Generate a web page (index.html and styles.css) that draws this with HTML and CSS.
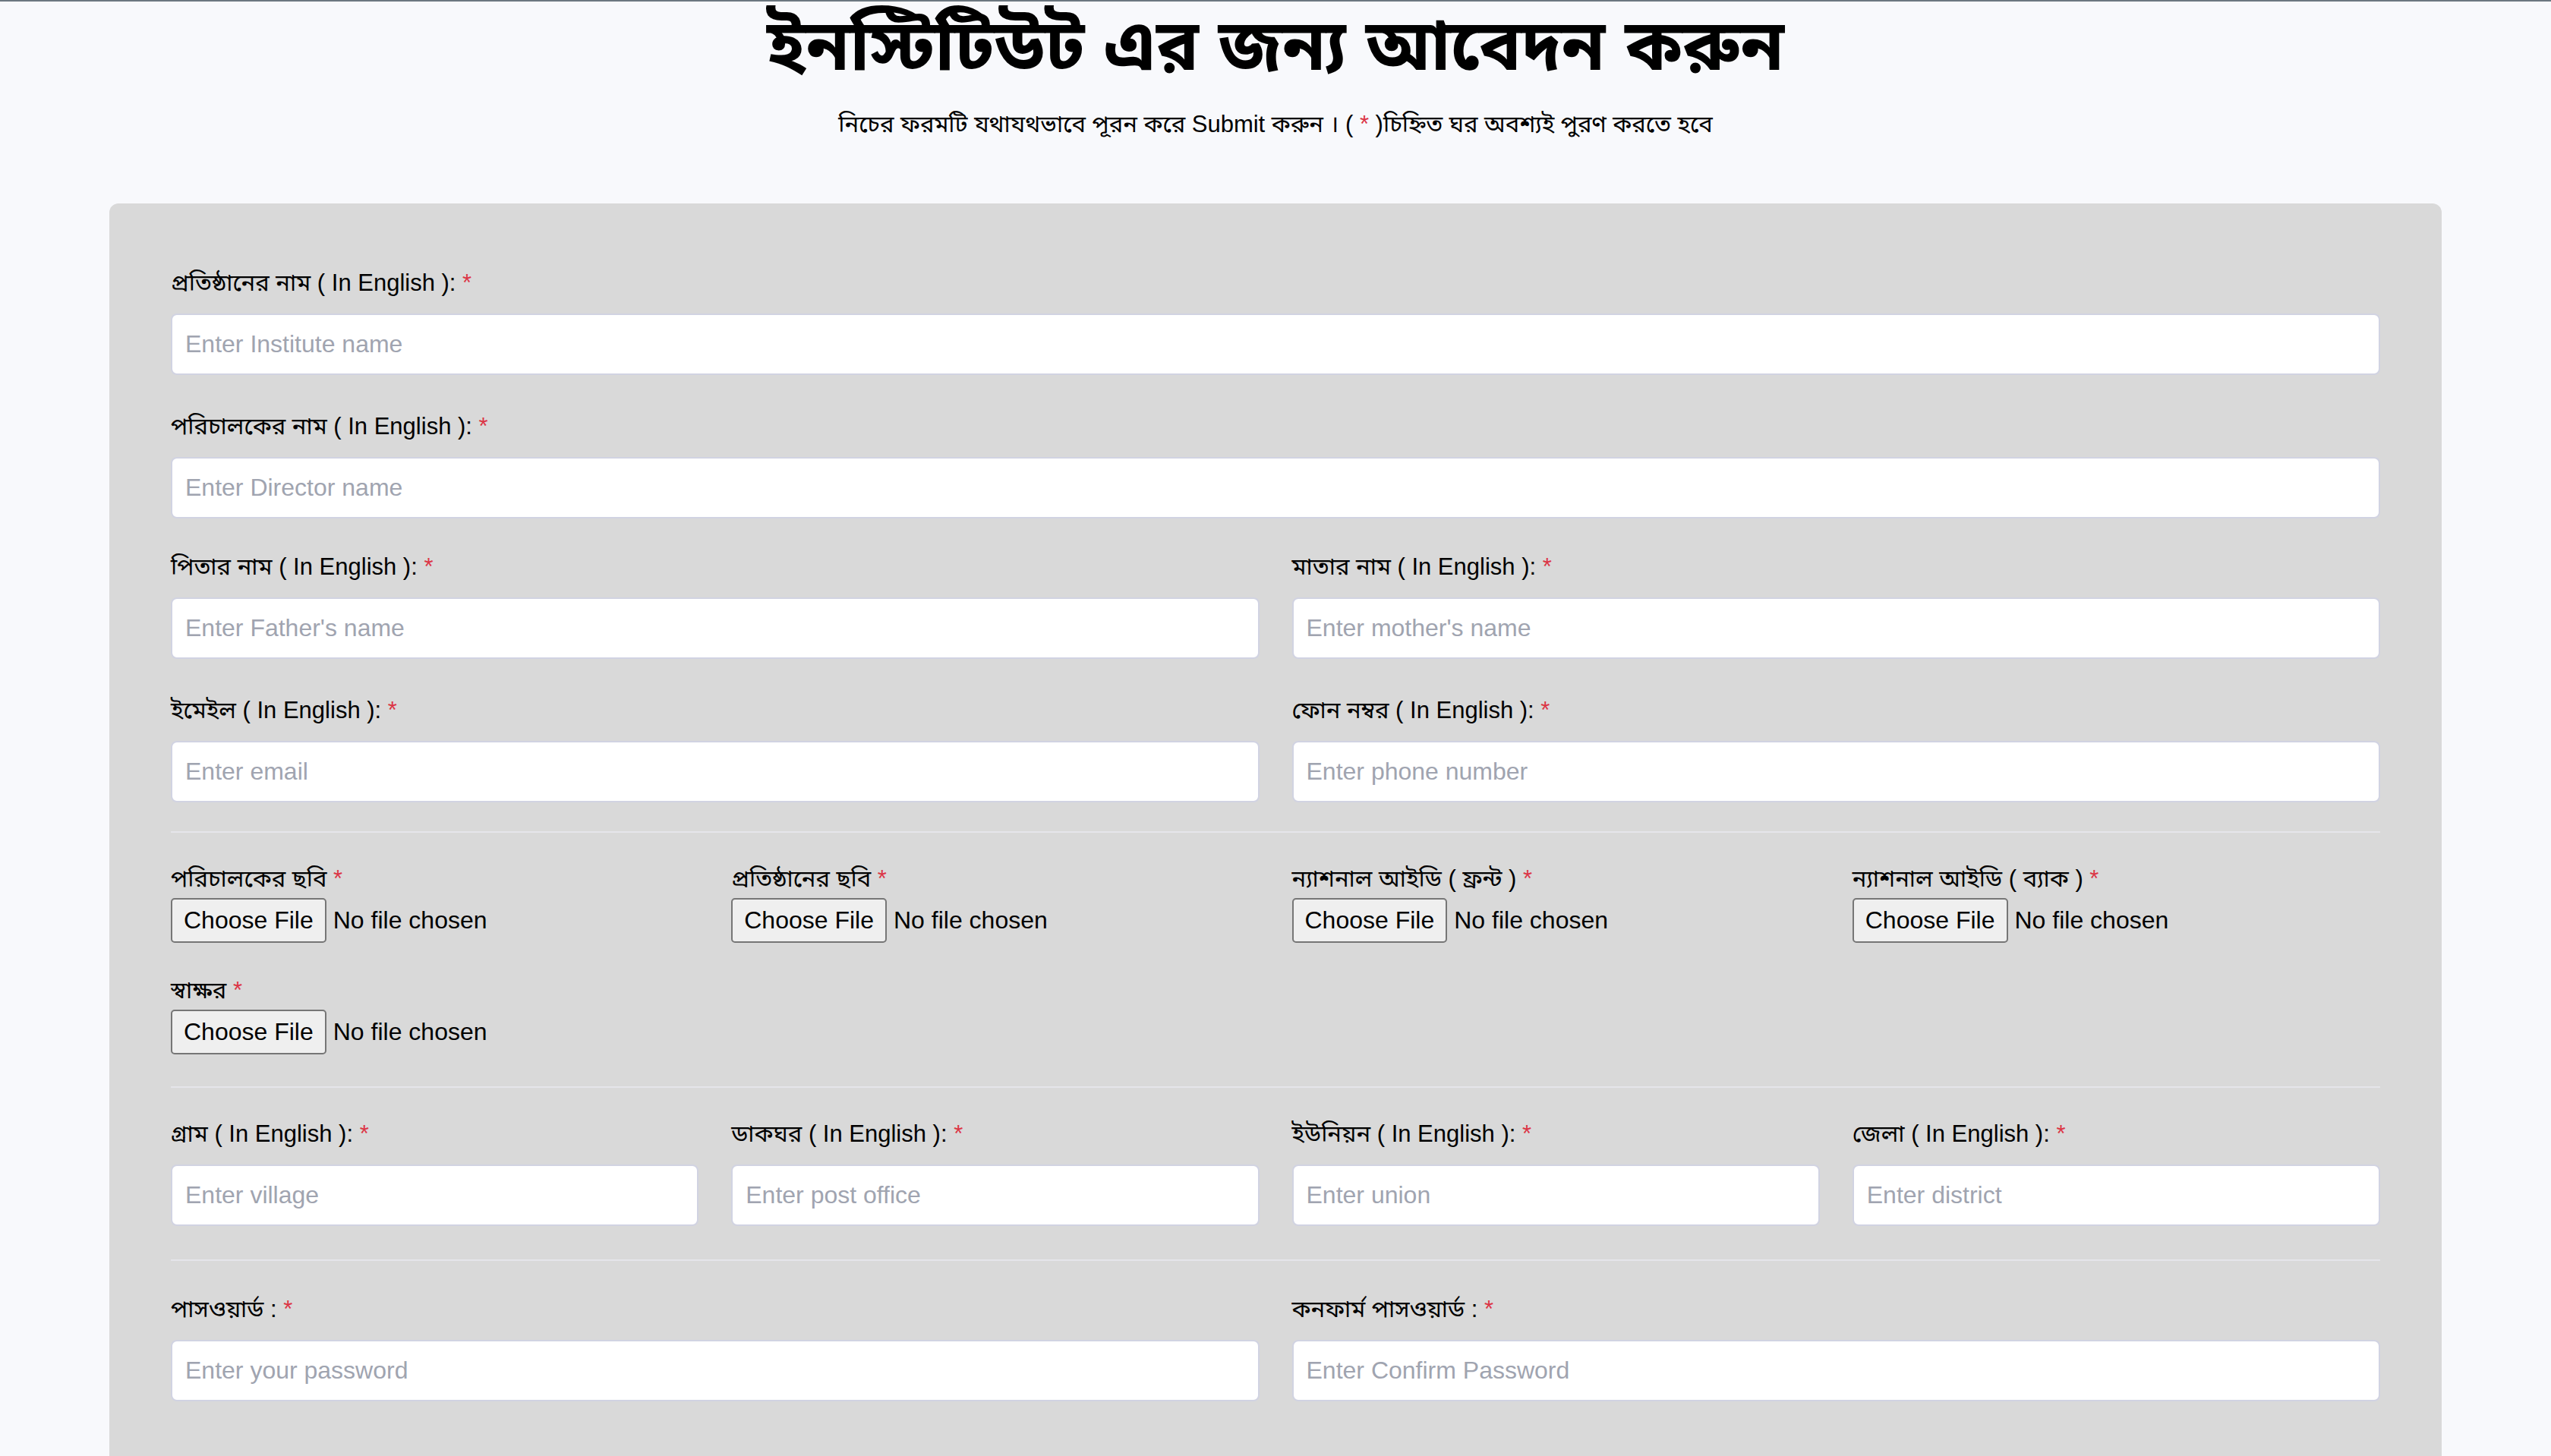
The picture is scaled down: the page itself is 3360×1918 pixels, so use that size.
FILE: index.html
```html
<!DOCTYPE html>
<html lang="bn">
<head>
<meta charset="utf-8">
<title>ইনস্টিটিউট এর জন্য আবেদন করুন</title>
<link rel="stylesheet" href="styles.css">
</head>
<body>
<div class="topbar"></div>
<header class="page-head">
  <h1 class="title">ইনস্টিটিউট এর জন্য আবেদন করুন</h1>
  <p class="subtitle">নিচের ফরমটি যথাযথভাবে পূরন করে Submit করুন । ( <span class="req">*</span> )চিহ্নিত ঘর অবশ্যই পুরণ করতে হবে</p>
</header>
<main class="card">
  <form class="form">
    <section class="section cols-1">
      <div class="group">
        <label class="label">প্রতিষ্ঠানের নাম ( In English ): <span class="req">*</span></label>
        <input class="control" type="text" placeholder="Enter Institute name">
      </div>
      <div class="group">
        <label class="label">পরিচালকের নাম ( In English ): <span class="req">*</span></label>
        <input class="control" type="text" placeholder="Enter Director name">
      </div>
    </section>
    <section class="section cols-2 tight-top">
      <div class="group">
        <label class="label">পিতার নাম ( In English ): <span class="req">*</span></label>
        <input class="control" type="text" placeholder="Enter Father's name">
      </div>
      <div class="group">
        <label class="label">মাতার নাম ( In English ): <span class="req">*</span></label>
        <input class="control" type="text" placeholder="Enter mother's name">
      </div>
      <div class="group">
        <label class="label">ইমেইল ( In English ): <span class="req">*</span></label>
        <input class="control" type="email" placeholder="Enter email">
      </div>
      <div class="group">
        <label class="label">ফোন নম্বর ( In English ): <span class="req">*</span></label>
        <input class="control" type="text" placeholder="Enter phone number">
      </div>
    </section>
    <hr class="divider">
    <section class="section cols-4 files">
      <div class="group">
        <label class="label file-label">পরিচালকের ছবি <span class="req">*</span></label>
        <input class="file" type="file">
      </div>
      <div class="group">
        <label class="label file-label">প্রতিষ্ঠানের ছবি <span class="req">*</span></label>
        <input class="file" type="file">
      </div>
      <div class="group">
        <label class="label file-label">ন্যাশনাল আইডি ( ফ্রন্ট ) <span class="req">*</span></label>
        <input class="file" type="file">
      </div>
      <div class="group">
        <label class="label file-label">ন্যাশনাল আইডি ( ব্যাক ) <span class="req">*</span></label>
        <input class="file" type="file">
      </div>
      <div class="group">
        <label class="label file-label">স্বাক্ষর <span class="req">*</span></label>
        <input class="file" type="file">
      </div>
    </section>
    <hr class="divider">
    <section class="section cols-4 address">
      <div class="group">
        <label class="label">গ্রাম ( In English ): <span class="req">*</span></label>
        <input class="control" type="text" placeholder="Enter village">
      </div>
      <div class="group">
        <label class="label">ডাকঘর ( In English ): <span class="req">*</span></label>
        <input class="control" type="text" placeholder="Enter post office">
      </div>
      <div class="group">
        <label class="label">ইউনিয়ন ( In English ): <span class="req">*</span></label>
        <input class="control" type="text" placeholder="Enter union">
      </div>
      <div class="group">
        <label class="label">জেলা ( In English ): <span class="req">*</span></label>
        <input class="control" type="text" placeholder="Enter district">
      </div>
    </section>
    <hr class="divider">
    <section class="section cols-2 passwords">
      <div class="group">
        <label class="label">পাসওয়ার্ড : <span class="req">*</span></label>
        <input class="control" type="password" placeholder="Enter your password">
      </div>
      <div class="group">
        <label class="label">কনফার্ম পাসওয়ার্ড : <span class="req">*</span></label>
        <input class="control" type="password" placeholder="Enter Confirm Password">
      </div>
    </section>
  </form>
</main>
</body>
</html>
```
FILE: styles.css
```css
html, body {
  margin: 0;
  padding: 0;
}

body {
  background: #f8f9fc;
  color: #000;
  font-family: "Liberation Sans", "Noto Sans Bengali", "Noto Sans", "Lohit Bengali", "FreeSans", sans-serif;
}

.topbar {
  height: 2px;
  background: #6c7780;
}

.page-head {
  text-align: center;
}

.title {
  margin: 8px 0 0;
  font-size: 93px;
  font-weight: 700;
  line-height: 100px;
}

.subtitle {
  margin: 32px 0 0;
  font-size: 31px;
  line-height: 44px;
}

.req {
  color: #dc3545;
}

.card {
  box-sizing: border-box;
  width: 3072px;
  margin: 82px auto 0;
  padding: 44px 81px 200px;
  background: #d9d9d9;
  border-radius: 12px 12px 0 0;
}

.section {
  display: grid;
  column-gap: 43px;
  row-gap: 45px;
  padding: 38px 0;
}

.section.tight-top {
  padding-top: 0;
}

.cols-1 {
  grid-template-columns: 1fr;
  padding-bottom: 41px;
}

.cols-2 {
  grid-template-columns: repeat(2, 1fr);
}

.cols-4 {
  grid-template-columns: repeat(4, 1fr);
}

.files {
  row-gap: 40px;
  padding-bottom: 42px;
}

.address {
  padding-bottom: 44px;
}

.passwords {
  padding-top: 41px;
}

.group {
  display: flex;
  flex-direction: column;
  min-width: 0;
}

.label {
  display: block;
  height: 46px;
  line-height: 46px;
  margin-bottom: 17px;
  font-size: 31px;
  white-space: nowrap;
}

.file-label {
  margin-bottom: 2px;
}

.control {
  box-sizing: border-box;
  width: 100%;
  height: 81px;
  padding: 0 17px;
  border: 2px solid #d1d3e2;
  border-radius: 8px;
  background: #fff;
  font-family: "Liberation Sans", sans-serif;
  font-size: 32px;
  color: #333;
  outline: none;
}

.control::placeholder {
  color: #a0a4b0;
}

.file {
  font-family: "Liberation Sans", sans-serif;
  font-size: 32px;
  color: #000;
  height: 59px;
}

.file::file-selector-button {
  box-sizing: border-box;
  height: 59px;
  margin-right: 9px;
  padding: 0 15px;
  border: 2px solid #767676;
  border-radius: 5px;
  background: #efefef;
  color: #000;
  font-family: "Liberation Sans", sans-serif;
  font-size: 32px;
}

.divider {
  height: 2px;
  margin: 0;
  border: 0;
  background: #e5e5ea;
}
```
